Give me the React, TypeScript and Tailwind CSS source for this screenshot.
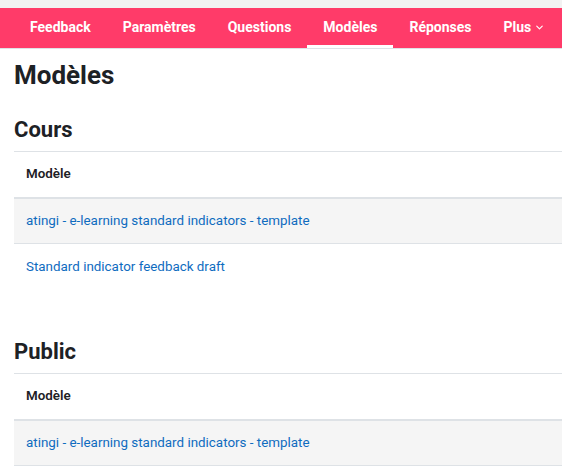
import { ChevronDown } from "lucide-react";

const tabs = ["Feedback", "Paramètres", "Questions", "Modèles", "Réponses"];

function TemplateTable({ rows }: { rows: string[] }) {
  return (
    <div className="w-[560px] text-[13.4px]">
      <div className="h-[48px] flex items-center px-3 font-semibold text-[#1d2125] border-t border-b-2 border-[#dee2e6]">
        Modèle
      </div>
      {rows.map((r, i) => (
        <div
          key={i}
          className={`h-[45px] flex items-center px-3 pt-px ${
            i % 2 === 0 ? "bg-[#f5f5f5] border-b border-[#dee2e6]" : "bg-white"
          }`}
        >
          <a href="#" className="text-[#0f6cbf]">
            {r}
          </a>
        </div>
      ))}
    </div>
  );
}

export default function App() {
  return (
    <main
      className="min-h-screen bg-white overflow-hidden"
      style={{ fontFamily: 'Roboto, "Noto Sans", sans-serif' }}
    >
      {/* Top strip */}
      <div className="h-2 bg-[#f2f2f2]" />

      {/* Secondary navigation */}
      <nav className="h-[41px] bg-[#ff3b69] border-b border-[#dee2e6] flex items-stretch pl-[14px]">
        {tabs.map((t) => (
          <a
            key={t}
            href="#"
            className={`flex items-center px-4 pt-px text-[14px] font-bold text-white whitespace-nowrap border-b-[3px] ${
              t === "Modèles" ? "border-white" : "border-transparent"
            }`}
          >
            {t}
          </a>
        ))}
        <a
          href="#"
          className="flex items-center gap-[3px] px-4 pt-px text-[14px] font-bold text-white border-b-[3px] border-transparent"
        >
          Plus
          <ChevronDown className="w-[11px] h-[11px]" strokeWidth={2.5} />
        </a>
      </nav>

      <div className="pl-[14px]">
        <h2 className="mt-[11px] text-[26px] leading-[31px] font-bold text-[#1d2125]">Modèles</h2>

        <h3 className="mt-[26px] mb-2 text-[22px] leading-[26px] font-bold text-[#1d2125]">Cours</h3>
        <TemplateTable
          rows={[
            "atingi - e-learning standard indicators - template",
            "Standard indicator feedback draft",
          ]}
        />

        <h3 className="mt-[50px] mb-2 text-[22px] leading-[26px] font-bold text-[#1d2125]">Public</h3>
        <TemplateTable rows={["atingi - e-learning standard indicators - template"]} />
      </div>
    </main>
  );
}
